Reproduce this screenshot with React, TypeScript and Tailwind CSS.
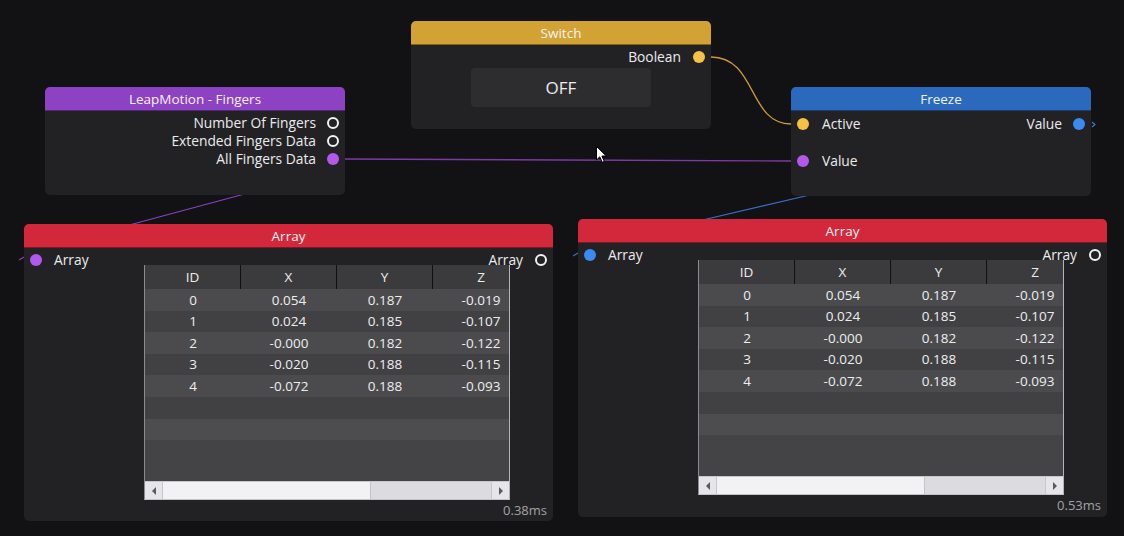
import React from "react";

type NodeProps = {
  pos: string;
  header: string;
  title: string;
  children?: React.ReactNode;
};

function Node({ pos, header, title, children }: NodeProps) {
  return (
    <div className={`absolute ${pos} flex flex-col overflow-hidden rounded-[5px] bg-[#222224]`}>
      <div
        className={`flex h-[24px] shrink-0 items-center justify-center border-b border-black/40 pt-[1px] text-[13.5px] font-medium text-[#f3f3f3] ${header}`}
      >
        {title}
      </div>
      <div className="flex flex-1 flex-col">{children}</div>
    </div>
  );
}

function OutDot({ color }: { color: string }) {
  return <span className={`block h-[12px] w-[12px] shrink-0 rounded-full ${color}`} />;
}

function RingDot() {
  return <span className="block h-[12px] w-[12px] shrink-0 rounded-full border-2 border-[#f2f2f2]" />;
}

const rows = [
  ["0", "0.054", "0.187", "-0.019"],
  ["1", "0.024", "0.185", "-0.107"],
  ["2", "-0.000", "0.182", "-0.122"],
  ["3", "-0.020", "0.188", "-0.115"],
  ["4", "-0.072", "0.188", "-0.093"],
];

function DataTable() {
  return (
    <div className="ml-[120px] mt-[-5px] flex h-[235px] w-[366px] flex-col border-x border-b border-l-[#8c8c90] border-r-[#b4b4b8] border-b-[#c4c4c8] bg-[#444446]">
      <div className="flex-1 overflow-hidden">
        <div className="w-[384px]">
          <div className="grid h-[24px] grid-cols-[96px_96px_96px_96px] bg-[#3b3b3d] text-[13.5px] font-medium text-[#ededed]">
            <div className="flex items-center justify-center border-r border-[#101012]">ID</div>
            <div className="flex items-center justify-center border-r border-[#101012]">X</div>
            <div className="flex items-center justify-center border-r border-[#101012]">Y</div>
            <div className="flex items-center justify-center">Z</div>
          </div>
          {rows.map((r, i) => (
            <div
              key={i}
              className={`grid h-[21.6px] grid-cols-[96px_96px_96px_96px] text-[13.5px] font-medium text-[#eeeeee] ${
                i % 2 === 0 ? "bg-[#4b4b4d]" : "bg-[#414143]"
              }`}
            >
              {r.map((c, j) => (
                <div key={j} className="flex items-center justify-center">
                  {c}
                </div>
              ))}
            </div>
          ))}
          <div className="h-[21.6px] bg-[#414143]" />
          <div className="h-[21.6px] bg-[#4d4d4f]" />
        </div>
      </div>
      <div className="flex h-[18px] shrink-0 border-t border-[#c8c8cc] bg-[#dcdbe0]">
        <div className="flex w-[18px] items-center justify-center border-r border-[#c8c8cc] bg-[#e6e6ea]">
          <span className="block h-0 w-0 border-y-[4px] border-r-[4px] border-y-transparent border-r-[#5a5a5e]" />
        </div>
        <div className="w-[208px] border-r border-[#c4c4c8] bg-[#f2f1f4]" />
        <div className="flex-1" />
        <div className="flex w-[18px] items-center justify-center border-l border-[#c8c8cc] bg-[#e6e6ea]">
          <span className="block h-0 w-0 border-y-[4px] border-l-[4px] border-y-transparent border-l-[#5a5a5e]" />
        </div>
      </div>
    </div>
  );
}

function ArrayBody({ dot, time }: { dot: string; time: string }) {
  return (
    <>
      <div className="mt-[2px] flex h-[20px] items-center justify-between px-[6px] text-[13.8px] font-medium text-[#ececec]">
        <div className="flex items-center gap-[12px]">
          <OutDot color={dot} />
          <span>Array</span>
        </div>
        <div className="relative z-10 flex items-center gap-[12px]">
          <span>Array</span>
          <RingDot />
        </div>
      </div>
      <DataTable />
      <div className="mt-[2px] flex justify-end pr-[6px] text-[13px] leading-[16px] text-[#a2a2a6]">{time}</div>
    </>
  );
}

export default function App() {
  return (
    <div className="relative h-[536px] w-[1124px] overflow-hidden bg-[#121214] font-['Open_Sans','Noto_Sans',sans-serif]">
      <svg className="pointer-events-none absolute inset-0" width="1124" height="536">
        <path d="M 711 57 C 757 57, 748 124, 791 124" stroke="#c99a3c" strokeWidth="1.3" fill="none" />
        <path d="M 345 159 C 560 159, 570 161, 791 161" stroke="#7c3aa8" strokeWidth="1.3" fill="none" />
        <path d="M 252 192 L 118 228" stroke="#8b40c2" strokeWidth="1.2" fill="none" />
        <path d="M 814 194 L 694 222" stroke="#3a6fc0" strokeWidth="1.2" fill="none" />
        <path d="M 19 260 L 24 257" stroke="#8b40c2" strokeWidth="1.2" fill="none" />
        <path d="M 573 256 L 578 253" stroke="#3a6fc0" strokeWidth="1.2" fill="none" />
        <path d="M 1092 122 L 1095 124.5 L 1092 127" stroke="#3a7fd8" strokeWidth="1.1" fill="none" />
      </svg>

      <Node pos="left-[411px] top-[21px] w-[300px] h-[108px]" header="bg-[#d3a234]" title="Switch">
        <div className="mt-[2px] flex h-[20px] items-center justify-end gap-[12px] pr-[6px] text-[13.8px] font-medium text-[#ececec]">
          <span>Boolean</span>
          <OutDot color="bg-[#f5c244]" />
        </div>
        <div className="ml-[60px] mt-[1px] flex h-[39px] w-[180px] items-center justify-center rounded-[4px] bg-[#2d2d2f] text-[17px] font-medium text-[#ececec]">
          OFF
        </div>
      </Node>

      <Node pos="left-[45px] top-[87px] w-[300px] h-[108px]" header="bg-[#8c42c2]" title="LeapMotion - Fingers">
        <div className="flex flex-col pt-[3px] text-[13.8px] font-medium text-[#ececec]">
          <div className="flex h-[18px] items-center justify-end gap-[11px] pr-[6px]">
            <span>Number Of Fingers</span>
            <RingDot />
          </div>
          <div className="flex h-[18px] items-center justify-end gap-[11px] pr-[6px]">
            <span>Extended Fingers Data</span>
            <RingDot />
          </div>
          <div className="flex h-[18px] items-center justify-end gap-[11px] pr-[6px]">
            <span>All Fingers Data</span>
            <OutDot color="bg-[#b159ec]" />
          </div>
        </div>
      </Node>

      <Node pos="left-[791px] top-[87px] w-[300px] h-[109px]" header="bg-[#2b69bc]" title="Freeze">
        <div className="flex flex-col pt-[3px] text-[13.8px] font-medium text-[#ececec]">
          <div className="flex h-[20px] items-center justify-between px-[6px]">
            <div className="flex items-center gap-[13px]">
              <OutDot color="bg-[#f5c244]" />
              <span>Active</span>
            </div>
            <div className="flex items-center gap-[11px]">
              <span>Value</span>
              <OutDot color="bg-[#3a8af0]" />
            </div>
          </div>
          <div className="mt-[17px] flex h-[20px] items-center gap-[13px] px-[6px]">
            <OutDot color="bg-[#b159ec]" />
            <span>Value</span>
          </div>
        </div>
      </Node>

      <Node pos="left-[24px] top-[224px] w-[529px] h-[297px]" header="bg-[#d3283c]" title="Array">
        <ArrayBody dot="bg-[#b159ec]" time="0.38ms" />
      </Node>

      <Node pos="left-[578px] top-[219px] w-[529px] h-[298px]" header="bg-[#d3283c]" title="Array">
        <ArrayBody dot="bg-[#3a8af0]" time="0.53ms" />
      </Node>

      <svg className="pointer-events-none absolute left-[596px] top-[146px]" width="12" height="18" viewBox="0 0 12 18">
        <path
          d="M 0.5 0.5 L 0.5 14 L 3.8 10.8 L 6.2 16.3 L 8.3 15.4 L 5.9 10 L 10.3 10 Z"
          fill="#ffffff"
          stroke="#000000"
          strokeWidth="1"
          strokeLinejoin="round"
        />
      </svg>
    </div>
  );
}
